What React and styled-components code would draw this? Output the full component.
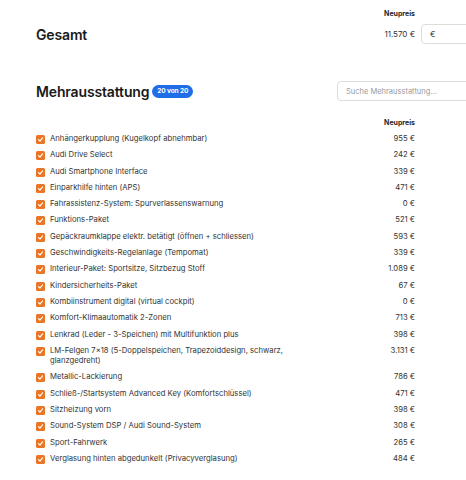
import styled, { createGlobalStyle } from "styled-components";

const GlobalStyle = createGlobalStyle`
  html, body {
    margin: 0;
    padding: 0;
    background: #ffffff;
    overflow: hidden;
  }
  body {
    font-family: Inter, "Noto Sans", "Liberation Sans", sans-serif;
    color: #2b2b2b;
  }
`;

const Page = styled.div`
  width: 475px;
  padding: 9px 0 0 36px;
`;

const PriceGrid = styled.div`
  display: grid;
  grid-template-columns: 1fr auto 90px;
  column-gap: 6px;
  align-items: center;
`;

const ColumnHead = styled.div`
  grid-column: 2;
  font-size: 7px;
  line-height: 10px;
  font-weight: 700;
  color: #1f1f1f;
  text-align: right;
  margin-bottom: ${(p) => p.$gap || 0}px;
`;

const SectionTitle = styled.h2`
  margin: 0;
  font-size: 14px;
  font-weight: 600;
  letter-spacing: -0.15px;
  color: #1a1a1a;
  display: flex;
  align-items: center;
  gap: 3px;
`;

const TotalPrice = styled.span`
  font-size: 8px;
  color: #333;
  text-align: right;
`;

const Field = styled.div`
  height: 20px;
  box-sizing: border-box;
  border: 1px solid #dcdcdc;
  border-radius: 4px;
  display: flex;
  align-items: center;
  padding: 0 8px;
  font-size: 8px;
  color: ${(p) => (p.$placeholder ? "#9a9a9a" : "#333")};
  background: #fff;
`;

const EquipmentHeader = styled.div`
  display: flex;
  align-items: center;
  justify-content: space-between;
  margin-top: 37px;
`;

const SearchField = styled(Field)`
  width: 174px;
  font-size: 7.5px;
`;

const Badge = styled.span`
  background: #1f6ee8;
  color: #fff;
  font-size: 6.5px;
  font-weight: 700;
  letter-spacing: -0.1px;
  border-radius: 7px;
  height: 13px;
  padding: 0 5px;
  display: inline-flex;
  align-items: center;
`;

const List = styled.div`
  margin-top: 17px;
`;

const Row = styled(PriceGrid)`
  align-items: start;
  padding: 3px 0;
  font-size: 7.7px;
  line-height: 10.3px;
`;

const NameCell = styled.label`
  display: flex;
  align-items: flex-start;
  gap: 5px;
`;

const Check = styled.span`
  width: 9px;
  height: 9px;
  flex: none;
  margin-top: 1px;
  border-radius: 1.5px;
  background: #eb7425;
  display: flex;
  align-items: center;
  justify-content: center;
`;

const Name = styled.span`
  max-width: 240px;
  color: #333;
`;

const Price = styled.span`
  text-align: right;
  color: #333;
  white-space: nowrap;
`;

const NextTitle = styled.h3`
  margin: 12px 0 0;
  font-size: 10px;
  font-weight: 600;
  color: #1a1a1a;
`;

const items = [
  ["Anhängerkupplung (Kugelkopf abnehmbar)", "955 €"],
  ["Audi Drive Select", "242 €"],
  ["Audi Smartphone Interface", "339 €"],
  ["Einparkhilfe hinten (APS)", "471 €"],
  ["Fahrassistenz-System: Spurverlassenswarnung", "0 €"],
  ["Funktions-Paket", "521 €"],
  ["Gepäckraumklappe elektr. betätigt (öffnen + schliessen)", "593 €"],
  ["Geschwindigkeits-Regelanlage (Tempomat)", "339 €"],
  ["Interieur-Paket: Sportsitze, Sitzbezug Stoff", "1.089 €"],
  ["Kindersicherheits-Paket", "67 €"],
  ["Kombiinstrument digital (virtual cockpit)", "0 €"],
  ["Komfort-Klimaautomatik 2-Zonen", "713 €"],
  ["Lenkrad (Leder - 3-Speichen) mit Multifunktion plus", "398 €"],
  ["LM-Felgen 7×18 (5-Doppelspeichen, Trapezoiddesign, schwarz, glanzgedreht)", "3.131 €"],
  ["Metallic-Lackierung", "786 €"],
  ["Schließ-/Startsystem Advanced Key (Komfortschlüssel)", "471 €"],
  ["Sitzheizung vorn", "398 €"],
  ["Sound-System DSP / Audi Sound-System", "308 €"],
  ["Sport-Fahrwerk", "265 €"],
  ["Verglasung hinten abgedunkelt (Privacyverglasung)", "484 €"],
];

const CheckMark = () => (
  <svg width="7" height="7" viewBox="0 0 12 12" fill="none">
    <path d="M2.5 6.2 L5 8.6 L9.6 3.4" stroke="#fff" strokeWidth="2" strokeLinecap="round" strokeLinejoin="round" />
  </svg>
);

export default function App() {
  return (
    <>
      <GlobalStyle />
      <Page>
        <PriceGrid>
          <ColumnHead $gap={5}>Neupreis</ColumnHead>
          <span />
          <SectionTitle>Gesamt</SectionTitle>
          <TotalPrice>11.570 €</TotalPrice>
          <Field>€</Field>
        </PriceGrid>

        <EquipmentHeader>
          <SectionTitle>
            Mehrausstattung <Badge>20 von 20</Badge>
          </SectionTitle>
          <SearchField $placeholder>Suche Mehrausstattung...</SearchField>
        </EquipmentHeader>

        <List>
          <PriceGrid>
            <ColumnHead $gap={3}>Neupreis</ColumnHead>
          </PriceGrid>
          {items.map(([name, price]) => (
            <Row key={name}>
              <NameCell>
                <Check>
                  <CheckMark />
                </Check>
                <Name>{name}</Name>
              </NameCell>
              <Price>{price}</Price>
              <span />
            </Row>
          ))}
        </List>

        <NextTitle>Weitere Ausstattung</NextTitle>
      </Page>
    </>
  );
}
